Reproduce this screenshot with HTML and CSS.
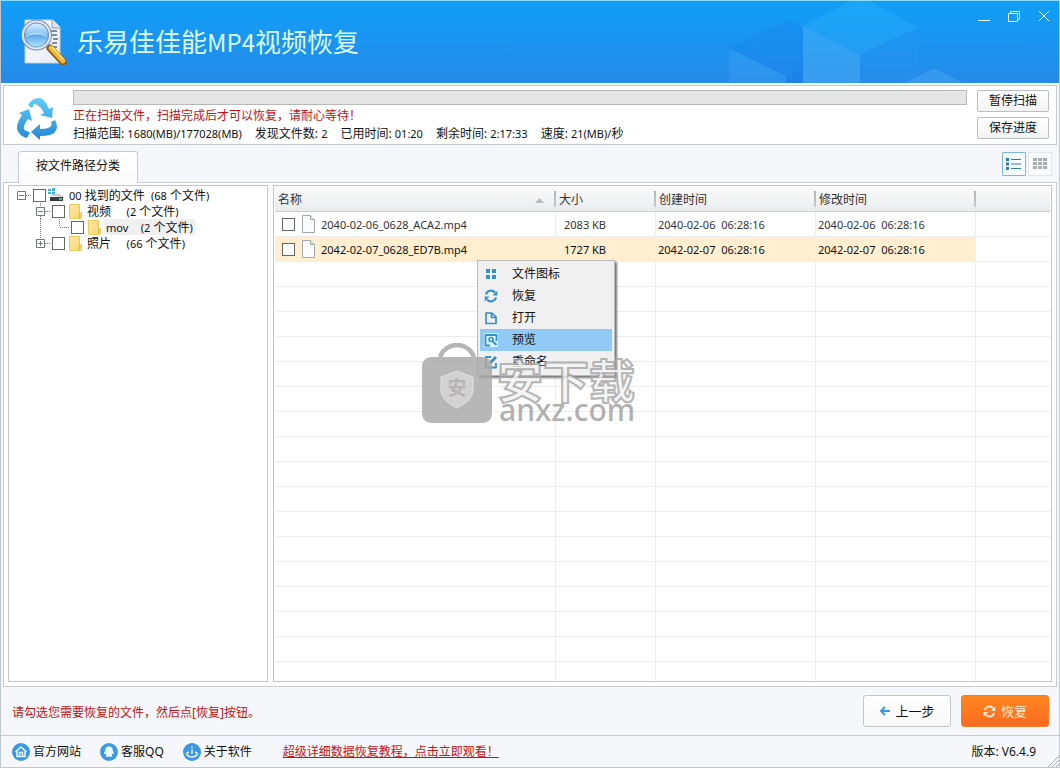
FILE: index.html
```html
<!DOCTYPE html>
<html lang="zh-CN">
<head>
<meta charset="utf-8">
<title>乐易佳佳能MP4视频恢复</title>
<link rel="stylesheet" href="styles.css">
</head>
<body>
<svg class="defs" aria-hidden="true">
  <defs>
    <linearGradient id="folder" x1="0" y1="0" x2="1" y2="1"><stop offset="0" stop-color="#ffe9a0"/><stop offset="1" stop-color="#f8d66c"/></linearGradient>
    <linearGradient id="cyc" gradientUnits="userSpaceOnUse" x1="0" y1="0" x2="0" y2="42"><stop offset="0" stop-color="#62cdf6"/><stop offset="1" stop-color="#2388d6"/></linearGradient>
    <linearGradient id="lens" x1="0" y1="0" x2="0" y2="1"><stop offset="0" stop-color="#e6f5ff"/><stop offset=".45" stop-color="#8cc4f4"/><stop offset=".5" stop-color="#5da5ea"/><stop offset="1" stop-color="#b4f0ff"/></linearGradient>
    <linearGradient id="paper" x1="0" y1="0" x2="1" y2="1"><stop offset="0" stop-color="#ffffff"/><stop offset="1" stop-color="#e4eaf6"/></linearGradient>
  </defs>
  <symbol id="i-folder" viewBox="0 0 13 15"><path d="M0.5 0.5h10v9l2-1v5.5l-1.500 .5H.5z" fill="url(#folder)" stroke="#ecc95e"/><path d="M10.500 9v5" stroke="#e0b64c"/></symbol>
  <symbol id="i-file" viewBox="0 0 13 18"><path d="M.5.5h8l4 4v13H.5z" fill="#fbfbfb" stroke="#a3a8ad"/><path d="M8.500.5v4h4" fill="#e2e5e8" stroke="#a3a8ad"/></symbol>
  <symbol id="i-sync" viewBox="0 0 14 14"><path d="M2 5.500A5.200 5.200 0 0 1 11 3.500M12 8.500A5.200 5.200 0 0 1 3 10.500" fill="none" stroke="currentColor" stroke-width="2"/><path d="M13.300 1.500v5H8.500zM.7 12.500v-5h4.800z" fill="currentColor"/></symbol>
</svg>
<div class="window">
  <header class="titlebar">
    <svg class="cubes" viewBox="0 0 240 83" aria-hidden="true">
      <path d="M8 48 67 20 82 27V70L65 76z" fill="#1478e8" fill-opacity=".22"/>
      <path d="M8 48 65 76V83H8z" fill="#5cb4ff" fill-opacity=".2"/>
      <path d="M65 76 82 69V83H65z" fill="#1478e8" fill-opacity=".4"/>
      <path d="M82 26 130 1H148L197 27 139 55z" fill="#3cc0ff" fill-opacity=".24"/>
      <path d="M82 26 139 55V83H82z" fill="#6cc8ff" fill-opacity=".28"/>
      <path d="M139 55 197 27V83H139z" fill="#3c9cff" fill-opacity=".12"/>
      <path d="M184 83 213 68 243 83z" fill="#6cc0ff" fill-opacity=".24"/>
    </svg>
    <svg class="logo" viewBox="0 0 46 46" aria-hidden="true">
      <path d="M4 1h28l7 7v36H4z" fill="url(#paper)" stroke="#c6cfe0"/>
      <path d="M31 1v8h8" fill="#dfe5f0" stroke="#8e9ab4"/>
      <path d="M30 12h6M31 16h5M32 20h5M31 24h5M29 28h7" stroke="#5d6884" stroke-width="1.400"/>
      <path d="M29 29 42 43" stroke="#8b5a18" stroke-width="7" stroke-linecap="round"/>
      <path d="M30 29 42 42" stroke="#f7b92e" stroke-width="5" stroke-linecap="round"/>
      <path d="M31 28 42 40" stroke="#ffe58e" stroke-width="1.500"/>
      <circle cx="15.500" cy="16" r="13.500" fill="url(#lens)" stroke="#7d8fae" stroke-width="4"/>
      <circle cx="15.500" cy="16" r="13.500" fill="none" stroke="#dbe6f4" stroke-width="2"/>
      <path d="M5 17q10-5 21 0" stroke="#d6edff" fill="none"/>
    </svg>
    <h1>乐易佳佳能<span>MP4</span>视频恢复</h1>
    <div class="win-controls">
      <button type="button" aria-label="最小化"><svg viewBox="0 0 14 14"><path d="M1 11.500h12"/></svg></button>
      <button type="button" aria-label="还原"><svg viewBox="0 0 14 14"><path d="M1.500 4.500h9v8h-9zM3.500 4v-1.500h9v8H11"/></svg></button>
      <button type="button" aria-label="关闭"><svg viewBox="0 0 14 14"><path d="M2 2 12 12M12 2 2 12"/></svg></button>
    </div>
  </header>

  <section class="status">
    <svg class="recycle" viewBox="0 0 40 42" aria-hidden="true">
      <g fill="url(#cyc)">
        <path d="M11 7Q15 0 22 0q5 0 9 9l1 2 4-2-1 11-12-3 4-2-3-5Q20 6 17 6l-2 4z"/>
        <path d="M2 15 12 11l3 12-4-2q-5 7-4 10 1 2 6 3l-3 6Q2 38 0 31q-1-5 5-14z"/>
        <path d="M14 34 23 26v5q9 0 11-3 1-2 0-4l4-2q4 7 0 12-3 4-15 4v4z"/>
      </g>
    </svg>
    <div class="scan">
      <progress value="0" max="100" aria-label="扫描进度"></progress>
      <p class="warn">正在扫描文件，扫描完成后才可以恢复，请耐心等待！</p>
      <p class="stats">
        <span>扫描范围: <b>1680(MB)/177028(MB)</b></span>
        <span>发现文件数: <b>2</b></span>
        <span>已用时间: <b>01:20</b></span>
        <span>剩余时间: <b>2:17:33</b></span>
        <span>速度: <b>21(MB)/</b>秒</span>
      </p>
    </div>
    <div class="scan-actions">
      <button type="button">暂停扫描</button>
      <button type="button">保存进度</button>
    </div>
  </section>

  <nav class="tabs">
    <button type="button" class="tab">按文件路径分类</button>
    <div class="views">
      <button type="button" class="active" aria-label="列表视图"><svg viewBox="0 0 16 12"><path d="M0 0h3v3H0zM0 4.500h3v3H0zM0 9h3v3H0zM5 1h10v1H5zM5 5.500h10v1H5zM5 10h10v1H5z"/></svg></button>
      <button type="button" aria-label="图标视图"><svg viewBox="0 0 16 12"><path d="M1 0h4v3H1zM6 0h4v3H6zM11 0h4v3h-4zM1 4h4v3H1zM6 4h4v3H6zM11 4h4v3h-4zM1 8h4v3H1zM6 8h4v3H6zM11 8h4v3h-4z"/></svg></button>
    </div>
  </nav>

  <main class="work">
    <ul class="tree">
      <li>
        <svg class="node" viewBox="0 0 19 16"><path class="box" d="M3.500 4.500h8v8h-8zM5 8.500h5"/><path class="dots" d="M12 8.500h6"/></svg>
        <input type="checkbox" id="t0">
        <svg class="drive" viewBox="0 0 16 14" aria-hidden="true"><path d="M0 1h3v2H0zM4 0h3v3H4zM0 4h3v2H0zM4 4h3v3H4z" fill="#35b4dc"/><path d="M3 8 5 6h7l3 3z" fill="#c7cbce"/><path d="M2 9h13v4H2z" fill="#353b3e"/><path d="M11 10h3v2h-3z" fill="#35d060"/></svg>
        <label for="t0"><b>00</b> 找到的文件&nbsp; <b>(68</b> 个文件<b>)</b></label>
      </li>
      <li>
        <i class="pad"></i>
        <svg class="node" viewBox="0 0 19 16"><path class="dots" d="M7.500 0v4M12 8.500h6M7.500 13v3"/><path class="box" d="M3.500 4.500h8v8h-8zM5 8.500h5"/></svg>
        <input type="checkbox" id="t1">
        <svg class="folder"><use href="#i-folder"/></svg>
        <label for="t1">视频 &nbsp;&nbsp;&nbsp; <b>(2</b> 个文件<b>)</b></label>
      </li>
      <li>
        <i class="pad"></i>
        <svg class="node" viewBox="0 0 19 16"><path class="dots" d="M7.500 0v16"/></svg>
        <svg class="node" viewBox="0 0 19 16"><path class="dots" d="M7.500 0v8M8 8.500h10"/></svg>
        <input type="checkbox" id="t2">
        <svg class="folder"><use href="#i-folder"/></svg>
        <label for="t2" class="current"><b>mov</b> &nbsp;&nbsp; <b>(2</b> 个文件<b>)</b></label>
      </li>
      <li>
        <i class="pad"></i>
        <svg class="node" viewBox="0 0 19 16"><path class="dots" d="M7.500 0v4M12 8.500h6"/><path class="box" d="M3.500 4.500h8v8h-8zM5 8.500h5M7.500 6v5"/></svg>
        <input type="checkbox" id="t3">
        <svg class="folder"><use href="#i-folder"/></svg>
        <label for="t3">照片 &nbsp;&nbsp;&nbsp; <b>(66</b> 个文件<b>)</b></label>
      </li>
    </ul>

    <div class="list">
      <table>
        <colgroup><col class="c-name"><col class="c-size"><col class="c-time"><col class="c-time"><col></colgroup>
        <thead>
          <tr><th><div class="sorted">名称<svg viewBox="0 0 9 5"><path d="M0 5 4.500 0 9 5z"/></svg></div></th><th>大小</th><th>创建时间</th><th>修改时间</th><th></th></tr>
        </thead>
        <tbody>
          <tr><td><div class="name"><input type="checkbox" id="f1"><svg><use href="#i-file"/></svg><label for="f1">2040-02-06_0628_ACA2.mp4</label></div></td><td class="size">2083 KB</td><td>2040-02-06&nbsp; 06:28:16</td><td>2040-02-06&nbsp; 06:28:16</td><td></td></tr>
          <tr class="selected"><td><div class="name"><input type="checkbox" id="f2"><svg><use href="#i-file"/></svg><label for="f2">2042-02-07_0628_ED7B.mp4</label></div></td><td class="size">1727 KB</td><td>2042-02-07&nbsp; 06:28:16</td><td>2042-02-07&nbsp; 06:28:16</td><td></td></tr>
          <tr><td></td><td></td><td></td><td></td><td></td></tr>
          <tr><td></td><td></td><td></td><td></td><td></td></tr>
          <tr><td></td><td></td><td></td><td></td><td></td></tr>
          <tr><td></td><td></td><td></td><td></td><td></td></tr>
          <tr><td></td><td></td><td></td><td></td><td></td></tr>
          <tr><td></td><td></td><td></td><td></td><td></td></tr>
          <tr><td></td><td></td><td></td><td></td><td></td></tr>
          <tr><td></td><td></td><td></td><td></td><td></td></tr>
          <tr><td></td><td></td><td></td><td></td><td></td></tr>
          <tr><td></td><td></td><td></td><td></td><td></td></tr>
          <tr><td></td><td></td><td></td><td></td><td></td></tr>
          <tr><td></td><td></td><td></td><td></td><td></td></tr>
          <tr><td></td><td></td><td></td><td></td><td></td></tr>
          <tr><td></td><td></td><td></td><td></td><td></td></tr>
          <tr><td></td><td></td><td></td><td></td><td></td></tr>
          <tr><td></td><td></td><td></td><td></td><td></td></tr>
          <tr class="rest"><td></td><td></td><td></td><td></td><td></td></tr>
        </tbody>
      </table>

      <div class="menu" role="menu">
        <button type="button" role="menuitem"><svg viewBox="0 0 14 14"><path d="M2 2h4v4H2zM8 2h4v4H8zM2 8h4v4H2zM8 8h4v4H8z" fill="currentColor"/></svg>文件图标</button>
        <button type="button" role="menuitem"><svg><use href="#i-sync"/></svg>恢复</button>
        <button type="button" role="menuitem"><svg viewBox="0 0 14 14"><path d="M2 2h6l4 4v6.500H2zM7.500 2v4.500h4" fill="none" stroke="currentColor" stroke-width="1.700" stroke-linejoin="round"/></svg>打开</button>
        <button type="button" role="menuitem" class="hot"><svg viewBox="0 0 14 14"><path d="M12.500 8V2h-11v10.500H6" fill="none" stroke="currentColor" stroke-width="1.800" stroke-linejoin="round"/><circle cx="7" cy="6.500" r="2" fill="none" stroke="currentColor" stroke-width="1.600"/><path d="M8.500 8l4 4" stroke="currentColor" stroke-width="2"/></svg>预览</button>
        <button type="button" role="menuitem"><svg viewBox="0 0 14 14"><path d="M7 2H2v10.500h10V8" fill="none" stroke="currentColor" stroke-width="1.800" stroke-linejoin="round"/><path d="M5 9l1-3 5-5 2 2-5 5z" fill="currentColor"/></svg>重命名</button>
      </div>

      <div class="watermark" aria-hidden="true">
        <svg viewBox="0 0 70 80"><path d="M18 14a18 18 0 0 1 34 0" fill="none" stroke="#a6a6a6" stroke-width="4.500"/><rect y="14" width="70" height="66" rx="9" fill="#a8a8a8"/><path d="M35 28 51 34V48Q50 58 35 65 20 58 19 48V34z" fill="#c9c9c9" stroke="#dadada"/><text x="35" y="52" text-anchor="middle">安</text></svg>
        <div class="words"><strong>安下载</strong><span>anxz.com</span></div>
      </div>
    </div>
  </main>

  <section class="actions">
    <p class="warn">请勾选您需要恢复的文件，然后点[恢复]按钮。</p>
    <button type="button" class="back"><svg viewBox="0 0 11 10"><path d="M11 5H2M6 1 2 5l4 4" fill="none" stroke="#3a94dc" stroke-width="2"/></svg>上一步</button>
    <button type="button" class="recover"><svg viewBox="0 0 14 14"><use href="#i-sync"/></svg>恢复</button>
  </section>

  <footer class="foot">
    <a href="#site"><svg viewBox="0 0 18 18"><circle cx="9" cy="9" r="9"/><path d="M3.500 9 9 4l5.500 5M5 8.500V13.500h8V8.500M7.500 13.500V9.500h3v4" class="line"/></svg>官方网站</a>
    <a href="#qq"><svg viewBox="0 0 18 18"><circle cx="9" cy="9" r="9"/><path d="M9 3.500c-3 0-3.800 2-3.800 4.300-1 1.500-1.500 2.700-1 3.400l1.300-.7.8 1.500-.8 1.700h7l-.8-1.700.8-1.500 1.300.7c.5-.7 0-1.900-1-3.400 0-2.300-.8-4.300-3.800-4.300z" class="solid"/></svg>客服QQ</a>
    <a href="#about"><svg viewBox="0 0 18 18"><circle cx="9" cy="9" r="9"/><path d="M9 6.500v4.500M9 3.500v1.800M6 9q-3 1-2 3 2 2 5 2t5-2q1-2-2-3" class="line"/></svg>关于软件</a>
    <a href="#guide" class="guide">超级详细数据恢复教程，点击立即观看！</a>
    <span class="version">版本: V6.4.9</span>
    <svg class="grip" viewBox="0 0 12 12" aria-hidden="true"><path d="M1 12 12 1M5 12l7-7M9 12l3-3" stroke="#a9adb2"/></svg>
  </footer>
</div>
</body>
</html>
```
FILE: styles.css
```css
* { box-sizing: border-box; }
body {
  margin: 0;
  font: 12px/16px "Noto Sans", "Noto Sans CJK SC", sans-serif;
  color: #111;
}
p, h1, ul { margin: 0; padding: 0; font-weight: 400; }
b { font-weight: 400; font-size: 11px; }
button { font: inherit; color: inherit; padding: 0; cursor: pointer; }
svg { flex: none; display: block; }
.defs { position: absolute; width: 0; height: 0; }
input[type="checkbox"] {
  appearance: none;
  flex: none;
  width: 13px;
  height: 13px;
  margin: 0;
  border: 1px solid #666;
  background: #fff;
}

.window {
  height: 100vh;
  display: flex;
  flex-direction: column;
  background: #f5f7fa;
  border: 1px solid #bfc6cd;
  border-top-color: #8adcf6;
}

.titlebar {
  position: relative;
  display: flex;
  align-items: center;
  height: 82px;
  padding-left: 20px;
  background: linear-gradient(#0f9ff8, #268ae8);
}
.cubes { position: absolute; right: 98px; top: -1px; width: 240px; height: 83px; }
.logo { width: 46px; height: 46px; }
.titlebar h1 {
  flex: 1;
  margin-left: 10px;
  padding-bottom: 2px;
  font: 400 26px/36px "Noto Sans CJK SC", sans-serif;
  color: #dcfbff;
}
.titlebar h1 span { font-size: 24px; }
.win-controls { position: relative; align-self: flex-start; display: flex; gap: 16px; padding: 8px 8px 0 0; }
.win-controls button { border: 0; background: none; }
.win-controls svg { width: 14px; height: 14px; fill: none; stroke: #e6fbff; }

.status {
  display: flex;
  margin: 2px 2px 0;
  padding: 4px 7px 1px 13px;
  border: 1px solid #c5c9ce;
  background: #fff;
}
.recycle { width: 40px; height: 42px; margin-top: 8px; }
.scan { flex: 1; margin: 0 10px 0 16px; }
progress {
  appearance: none;
  display: block;
  width: 100%;
  height: 15px;
  border: 1px solid #b5bab5;
  background: #e5e5e5;
}
progress::-webkit-progress-bar { background: #e5e5e5; }
.warn { color: #bc1414; }
.scan .warn { margin-top: 3px; }
.stats { display: flex; gap: 13px; line-height: 19px; white-space: nowrap; }
.scan-actions { display: flex; flex-direction: column; gap: 5px; }
.scan-actions button {
  width: 72px;
  height: 22px;
  line-height: 18px;
  border: 1px solid #bcbfc4;
  border-radius: 2px;
  background: linear-gradient(#fff, #f3f3f4);
}

.tabs { display: flex; align-items: flex-end; padding: 6px 7px 0 17px; }
.tab {
  position: relative;
  width: 120px;
  height: 32px;
  margin-bottom: -1px;
  padding-bottom: 4px;
  border: 1px solid #c8ccd2;
  border-bottom: 0;
  border-radius: 3px 3px 0 0;
  background: linear-gradient(#fff, #fafafb);
}
.views { display: flex; gap: 2px; margin: 0 0 6px auto; }
.views button {
  display: grid;
  place-items: center;
  width: 24px;
  height: 24px;
  border: 1px solid #e2e6ea;
  background: #fafbfc;
}
.views svg { width: 16px; height: 12px; fill: #a9adb0; }
.views .active { border-color: #7db6d8; background: #f4fbff; border-radius: 1px; }
.views .active svg { fill: #3479a8; }

.work {
  flex: 1;
  min-height: 0;
  display: flex;
  gap: 5px;
  margin: 0 2px;
  padding: 2px 4px 4px;
  border: 1px solid #c8ccd2;
  background: #fff;
}
.tree {
  flex: none;
  width: 260px;
  padding: 1px 5px;
  border: 1px solid #c2c6cb;
  list-style: none;
}
.tree li { display: flex; align-items: center; height: 16px; }
.pad, .node { flex: none; width: 19px; height: 16px; }
.node .box { fill: #fff; stroke: #71777d; }
.node .dots { fill: none; stroke: #777; stroke-dasharray: 1 1; }
.drive { width: 16px; height: 14px; margin-left: 2px; }
.folder { width: 13px; height: 15px; margin-left: 4px; }
.tree label { margin-left: 3px; padding: 1px 2px 0; white-space: nowrap; line-height: 15px; }
.tree .current { background: #f0f0f0; }

.list {
  position: relative;
  flex: 1;
  min-width: 0;
  padding: 1px 1px 0;
  border: 1px solid #c2c6cb;
}
table { width: 100%; height: 100%; table-layout: fixed; border-collapse: separate; border-spacing: 0; }
.c-name { width: 281px; }
.c-size { width: 100px; }
.c-time { width: 160px; }
th, td { height: 25px; padding: 2px 2px 0; overflow: hidden; white-space: nowrap; text-align: left; }
th {
  padding-left: 3px;
  font-weight: 400;
  color: #333;
  border-bottom: 1px solid #c9cccf;
  background: linear-gradient(#b2b5b8, #c9cbce) right center / 2px 16px no-repeat, linear-gradient(#fbfbfb, #e9eaec);
}
th:last-child { background: linear-gradient(#fbfbfb, #e9eaec); }
.sorted { display: flex; align-items: center; justify-content: space-between; padding-right: 10px; }
.sorted svg { width: 9px; height: 5px; fill: #b8bbbe; }
td { font-size: 11px; color: #333; border-bottom: 1px solid #ececee; border-right: 1px solid #ececee; }
td:last-child { border-right: 0; }
.size { text-align: right; padding-right: 49px; }
td:first-child { padding-top: 0; }
.name { display: flex; align-items: center; padding-left: 5px; }
.name svg { width: 13px; height: 18px; margin: 0 6px 0 7px; }
.name label { padding-top: 1px; }
.selected td { color: #111; background: #ffeecf; border-color: #ffeecf; }
.selected td:last-child { background: #fff; border-bottom-color: #ececee; }
.rest td { height: auto; border-bottom: 0; }

.menu {
  position: absolute;
  left: 203px;
  top: 74px;
  width: 138px;
  padding: 2px;
  border: 1px solid #b9b9b9;
  background: #f0f0f0;
  box-shadow: 2px 2px 2px #777;
}
.menu button {
  display: flex;
  align-items: center;
  gap: 14px;
  width: 100%;
  height: 22px;
  padding-left: 4px;
  border: 0;
  background: none;
}
.menu svg { width: 14px; height: 14px; color: #3392c8; }
.menu .hot { background: #91c9f7; }
.menu .hot svg { background: #d9f2ff; }

.watermark { position: absolute; left: 148px; top: 157px; display: flex; gap: 5px; opacity: .82; pointer-events: none; }
.watermark svg { width: 70px; height: 80px; }
.watermark text { font: 700 19px "Noto Sans CJK SC", sans-serif; fill: #a6a6a6; }
.words { display: flex; flex-direction: column; }
.words strong {
  font: 700 46px/48px "Noto Sans CJK SC", sans-serif;
  margin-top: 11px;
  color: #f4f4f4;
  -webkit-text-stroke: 2px #a6a6a6;
}
.words span { font: 500 30px/24px "Noto Sans", sans-serif; color: #a0a0a0; margin-top: -4px; padding-left: 2px; }

.actions { display: flex; align-items: center; height: 48px; padding: 0 10px 0 11px; }
.actions .warn { flex: 1; padding-top: 3px; }
.actions button {
  display: flex;
  align-items: center;
  justify-content: center;
  gap: 5px;
  width: 88px;
  height: 32px;
  border-radius: 3px;
  font-size: 13px;
}
.back { border: 1px solid #c3c6ca; background: linear-gradient(#fff, #f8f8f9); }
.back svg { width: 11px; height: 10px; }
.recover { margin-left: 10px; border: 1px solid #f77a28; background: linear-gradient(#ff861e, #fd6a22); }
.actions .recover { color: #ffeedd; }
.recover svg { width: 13px; height: 13px; }

.foot {
  position: relative;
  display: flex;
  align-items: center;
  height: 32px;
  padding: 0 23px 0 11px;
  border-top: 1px solid #c8ccd2;
}
.foot a { display: flex; align-items: center; gap: 3px; margin-right: 19px; color: #111; text-decoration: none; }
.foot a svg { width: 18px; height: 18px; fill: #3c98e0; }
.foot .line { fill: none; stroke: #e8f8ff; stroke-width: 1.5; }
.foot .solid { fill: #e8f8ff; }
.foot .guide { display: block; margin-left: 12px; color: #c41414; text-decoration: underline; }
.version { margin-left: auto; }
.grip { position: absolute; right: 0; bottom: 0; width: 12px; height: 12px; }
```
